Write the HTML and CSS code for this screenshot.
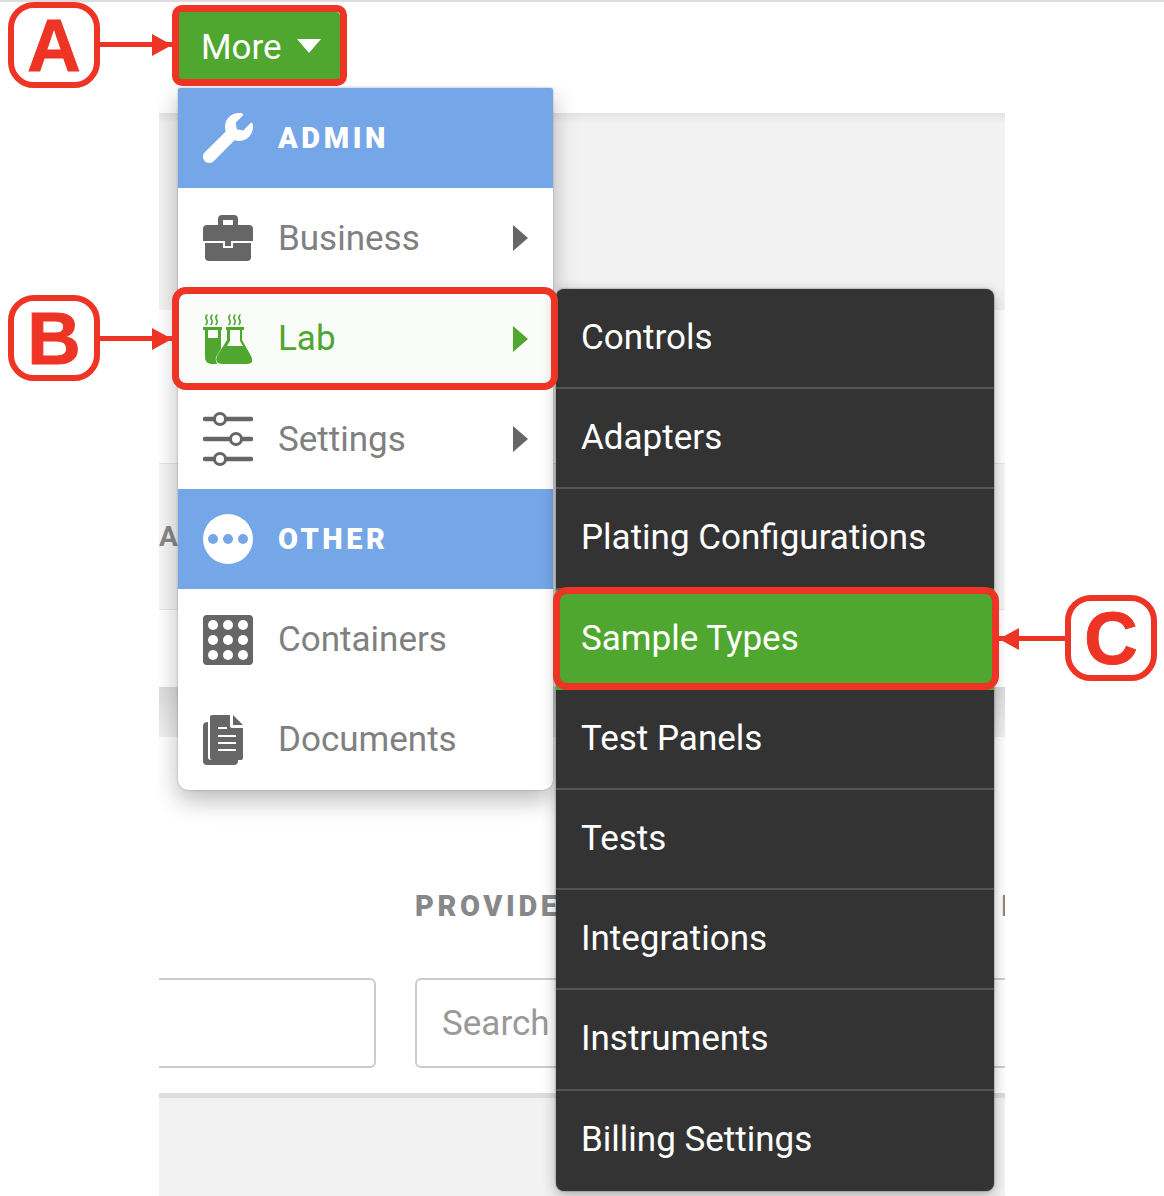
FILE: index.html
```html
<!DOCTYPE html>
<html lang="en">
<head>
    <meta charset="UTF-8">
    <title>More menu</title>
    <link rel="stylesheet" href="styles.css">
</head>
<body>

<div class="top-line"></div>

<!-- green button -->
<div class="nav">
    <button class="more-btn"><span class="more-text">More</span> <span class="caret"></span></button>
</div>

<!-- the app page behind the menus -->
<div class="shot">
    <div class="page-top"></div>
    <div class="page-row"></div>
    <div class="page-row page-row-alt"><span class="col-label">A</span></div>
    <div class="page-row page-row-end"></div>
    <div class="page-gap"></div>
    <div class="filters">
        <div class="filter-col filter-first">
            <div class="filter-label"></div>
            <div class="filter-input"></div>
        </div>
        <div class="filter-col">
            <div class="filter-label">PROVIDER</div>
            <div class="filter-input">Search</div>
        </div>
        <div class="filter-col filter-last">
            <div class="filter-label">I</div>
            <div class="filter-input"></div>
        </div>
    </div>
    <div class="page-bottom"></div>

    <!-- first level menu -->
    <div class="menu">
        <div class="menu-row menu-head">
            <svg class="icon" viewBox="0 0 512 512"><path fill="#fff" d="M507.73 109.1c-2.24-9.03-13.54-12.09-20.12-5.51l-74.36 74.36-67.88-11.31-11.31-67.88 74.36-74.36c6.62-6.62 3.43-17.9-5.66-20.16-47.38-11.74-99.55.91-136.58 37.93-39.64 39.64-50.55 97.1-34.05 147.2L18.74 402.76c-24.99 24.99-24.99 65.51 0 90.5 24.99 24.99 65.51 24.99 90.5 0l213.21-213.21c50.12 16.71 107.47 5.68 147.37-34.22 37.07-37.07 49.7-89.32 37.91-136.73z"/></svg>
            <span class="head-text">ADMIN</span>
        </div>
        <div class="menu-row">
            <svg class="icon" viewBox="0 0 50 46">
                <path fill="#666" fill-rule="evenodd" d="M15 10V4q0-4 4-4h12q4 0 4 4v6h11q4 0 4 4v12H0V14q0-4 4-4zM20 5v5h10V5z"/>
                <path fill="#666" d="M2 28h18v5h10v-5h18v14q0 4-4 4H6q-4 0-4-4z"/>
                <rect fill="#666" x="22" y="26" width="6" height="5"/>
            </svg>
            <span class="row-text">Business</span>
            <span class="arrow"></span>
        </div>
        <div class="menu-row menu-row-lab">
            <svg class="icon" viewBox="0 0 50 50">
                <g fill="none" stroke="#4fa72f" stroke-width="1.6" stroke-linecap="round">
                    <path d="M4 1q-2 2-.5 4.500t-.5 5M9 1q-2 2-.5 4.500t-.5 5M14 1q-2 2-.5 4.500t-.5 5"/>
                    <path d="M27 1q-2 2-.5 4.500t-.5 5M32 1q-2 2-.5 4.500t-.5 5M37 1q-2 2-.5 4.500t-.5 5"/>
                </g>
                <path fill="#4fa72f" fill-rule="evenodd" d="M0 13h19v3h-1v19l-5 8q-1 3 1 7H9q-7 0-7-7V16H0zM5 16v8h10v-8z"/>
                <path fill="#4fa72f" fill-rule="evenodd" d="M23 13h18v3h-2v10l9 16q4 8-5 8H20q-9 0-6-8l10-16V16h-1zM27 16v11l-3 5h16l-3-5V16z"/>
            </svg>
            <span class="row-text">Lab</span>
            <span class="arrow"></span>
        </div>
        <div class="menu-row">
            <svg class="icon icon-tall" viewBox="0 0 50 54">
                <g stroke="#666" stroke-width="4.5" stroke-linecap="round">
                    <path d="M2 7h46M2 27h46M2 47h46"/>
                </g>
                <g fill="#fff" stroke="#666" stroke-width="3">
                    <circle cx="17" cy="7" r="5.5"/>
                    <circle cx="33" cy="27" r="5.5"/>
                    <circle cx="17" cy="47" r="5.5"/>
                </g>
            </svg>
            <span class="row-text">Settings</span>
            <span class="arrow"></span>
        </div>
        <div class="menu-row menu-head">
            <svg class="icon" viewBox="0 0 50 50">
                <circle cx="25" cy="25" r="25" fill="#fff"/>
                <g fill="#74a6e8">
                    <circle cx="10" cy="25" r="5"/>
                    <circle cx="25" cy="25" r="5"/>
                    <circle cx="40" cy="25" r="5"/>
                </g>
            </svg>
            <span class="head-text">OTHER</span>
        </div>
        <div class="menu-row">
            <svg class="icon" viewBox="0 0 50 50">
                <rect width="50" height="50" rx="4" fill="#666"/>
                <g fill="#fff">
                    <circle cx="10" cy="10" r="5"/><circle cx="25" cy="10" r="5"/><circle cx="40" cy="10" r="5"/>
                    <circle cx="10" cy="25" r="5"/><circle cx="25" cy="25" r="5"/><circle cx="40" cy="25" r="5"/>
                    <circle cx="10" cy="40" r="5"/><circle cx="25" cy="40" r="5"/><circle cx="40" cy="40" r="5"/>
                </g>
            </svg>
            <span class="row-text">Containers</span>
        </div>
        <div class="menu-row">
            <svg class="icon" viewBox="0 0 50 50">
                <path fill="#666" d="M5 7v35q0 3 3 3h27v1q0 4-4 4H4q-4 0-4-4V11q0-4 5-4z"/>
                <path fill="#666" d="M7 0h20v11q0 2 2 2h11v30q0 2-2 2H9q-2 0-2-2V2q0-2 2-2zM30 0l10 10H30z"/>
                <path stroke="#fff" stroke-width="2" d="M15 13h9M15 21h18M15 28h18M15 35h18"/>
            </svg>
            <span class="row-text">Documents</span>
        </div>
    </div>

    <!-- second level menu -->
    <div class="submenu">
        <div class="sub-row">Controls</div>
        <div class="sub-row">Adapters</div>
        <div class="sub-row">Plating Configurations</div>
        <div class="sub-row sub-row-active">Sample Types</div>
        <div class="sub-row">Test Panels</div>
        <div class="sub-row">Tests</div>
        <div class="sub-row">Integrations</div>
        <div class="sub-row">Instruments</div>
        <div class="sub-row">Billing Settings</div>
    </div>
</div>

<!-- callouts drawn on top of the screenshot -->
<div class="mark mark-a"></div>
<div class="mark mark-b"></div>
<div class="mark mark-c"></div>

<div class="tag tag-a">A</div>
<div class="tag tag-b">B</div>
<div class="tag tag-c">C</div>

<div class="pointer pointer-a"></div>
<div class="pointer pointer-b"></div>
<div class="pointer pointer-c"></div>

</body>
</html>
```

FILE: styles.css
```css
body {
    margin: 0;
    height: 1196px;
    overflow: hidden;
    position: relative;
    background-color: white;
    font-family: Roboto, "Liberation Sans", sans-serif;
}

.top-line {
    height: 2px;
    background-color: #ddd;
}

.nav {
    height: 84px;
    padding-left: 178px;
    box-sizing: border-box;
    padding-top: 10px;
}

.more-btn {
    display: flex;
    align-items: center;
    gap: 15px;
    width: 162px;
    height: 68px;
    padding: 0 0 0 23px;
    border: none;
    border-radius: 4px;
    background-color: #4fa72f;
    color: white;
    font-family: inherit;
    font-size: 35px;
}

.more-text {
    padding-top: 3px;
}

.caret {
    border-top: 14px solid white;
    border-left: 12px solid transparent;
    border-right: 12px solid transparent;
}

.shot {
    position: relative;
    width: 846px;
    height: 1110px;
    margin-left: 159px;
    overflow: hidden;
    padding-top: 27px;
    box-sizing: border-box;
}

.page-top {
    height: 197px;
    background: linear-gradient(#e3e3e3, #f2f2f2 10px);
}

.page-row {
    height: 154px;
    border-bottom: 1px solid #e6e6e6;
    box-sizing: border-box;
}

.page-row-alt {
    height: 146px;
    background-color: #f6f6f6;
    color: #888;
    font-size: 28px;
    font-weight: 700;
    line-height: 146px;
}

.page-row-end {
    height: 77px;
    border-bottom: none;
}

.col-label {
    letter-spacing: 3px;
}

.page-gap {
    height: 50px;
    background: linear-gradient(#dcdcdc, #f0f0f0);
}

.filters {
    display: grid;
    grid-template-columns: 217px 361px 361px;
    gap: 39px;
    height: 356px;
    padding-top: 152px;
    box-sizing: border-box;
    margin-right: -200px;
}

.filter-label {
    height: 89px;
    color: #888;
    font-size: 29px;
    font-weight: 900;
    letter-spacing: 3.6px;
    white-space: nowrap;
}

.filter-input {
    height: 90px;
    box-sizing: border-box;
    border: 2px solid #ccc;
    border-radius: 6px;
    padding-left: 25px;
    color: #999;
    font-size: 35px;
    line-height: 88px;
}

.filter-first .filter-input {
    border-left: none;
    border-radius: 0 6px 6px 0;
}

.filter-last .filter-label {
    padding-left: 186px;
}

.page-bottom {
    height: 100px;
    border-top: 5px solid #ddd;
    background-color: #f2f2f2;
}

.menu {
    position: absolute;
    left: 19px;
    top: 2px;
    width: 375px;
    background-color: white;
    border-radius: 2px 2px 10px 10px;
    overflow: hidden;
    box-shadow: 0 10px 24px rgba(0, 0, 0, 0.28), 0 0 2px rgba(0, 0, 0, 0.3);
}

.menu-row {
    display: flex;
    align-items: center;
    height: 100.3px;
    padding: 0 25px;
    color: #808080;
    font-size: 35px;
}

.menu-head {
    background-color: #74a6e8;
    color: white;
}

.menu-row-lab {
    background-color: #f9fcf8;
    color: #4fa72f;
}

.icon {
    width: 50px;
    height: 50px;
    margin-right: 25px;
    flex: none;
}

.icon-tall {
    height: 54px;
}

.head-text {
    font-size: 29px;
    font-weight: 900;
    letter-spacing: 3.6px;
}

.row-text {
    flex: 1;
}

.arrow {
    border-left: 15px solid #666;
    border-top: 13px solid transparent;
    border-bottom: 13px solid transparent;
}

.menu-row-lab .arrow {
    border-left-color: #4fa72f;
}

.submenu {
    position: absolute;
    left: 397px;
    top: 203px;
    width: 438px;
    background-color: #333;
    border-radius: 8px;
    overflow: hidden;
    box-shadow: 0 4px 14px rgba(0, 0, 0, 0.3), 0 0 2px rgba(0, 0, 0, 0.5);
}

.sub-row {
    height: 100.2px;
    box-sizing: border-box;
    padding-left: 25px;
    border-bottom: 2px solid #555;
    color: white;
    font-size: 35px;
    line-height: 98px;
}

.sub-row:last-child {
    border-bottom: none;
}

.sub-row-active {
    background-color: #4fa72f;
    border-bottom: none;
}

/* red callouts */
.mark {
    position: absolute;
    box-sizing: border-box;
    border: 7px solid #ee3424;
    border-radius: 14px;
}

.mark-a {
    left: 172px;
    top: 5px;
    width: 175px;
    height: 81px;
    border-radius: 10px;
}

.mark-b {
    left: 172px;
    top: 287px;
    width: 386px;
    height: 103px;
}

.mark-c {
    left: 553px;
    top: 587px;
    width: 446px;
    height: 103px;
}

.tag {
    position: absolute;
    box-sizing: border-box;
    width: 92px;
    height: 86px;
    border: 6px solid #ee3424;
    border-radius: 26px;
    background-color: white;
    color: #ee3424;
    font-family: "Liberation Sans", sans-serif;
    font-size: 74px;
    font-weight: 700;
    line-height: 76px;
    text-align: center;
    -webkit-text-stroke: 1px #ee3424;
}

.tag-a {
    left: 8px;
    top: 2px;
}

.tag-b {
    left: 8px;
    top: 295px;
}

.tag-c {
    left: 1065px;
    top: 595px;
}

.pointer {
    position: absolute;
    height: 5px;
    background-color: #ee3424;
}

.pointer::after {
    content: "";
    position: absolute;
    top: -8px;
    border-top: 11px solid transparent;
    border-bottom: 11px solid transparent;
}

.pointer-a,
.pointer-b {
    left: 99px;
    width: 73px;
}

.pointer-a {
    top: 42px;
}

.pointer-b {
    top: 336px;
}

.pointer-a::after,
.pointer-b::after {
    right: 0;
    border-left: 20px solid #ee3424;
}

.pointer-c {
    left: 999px;
    top: 636px;
    width: 67px;
}

.pointer-c::after {
    left: 0;
    border-right: 20px solid #ee3424;
}
```
